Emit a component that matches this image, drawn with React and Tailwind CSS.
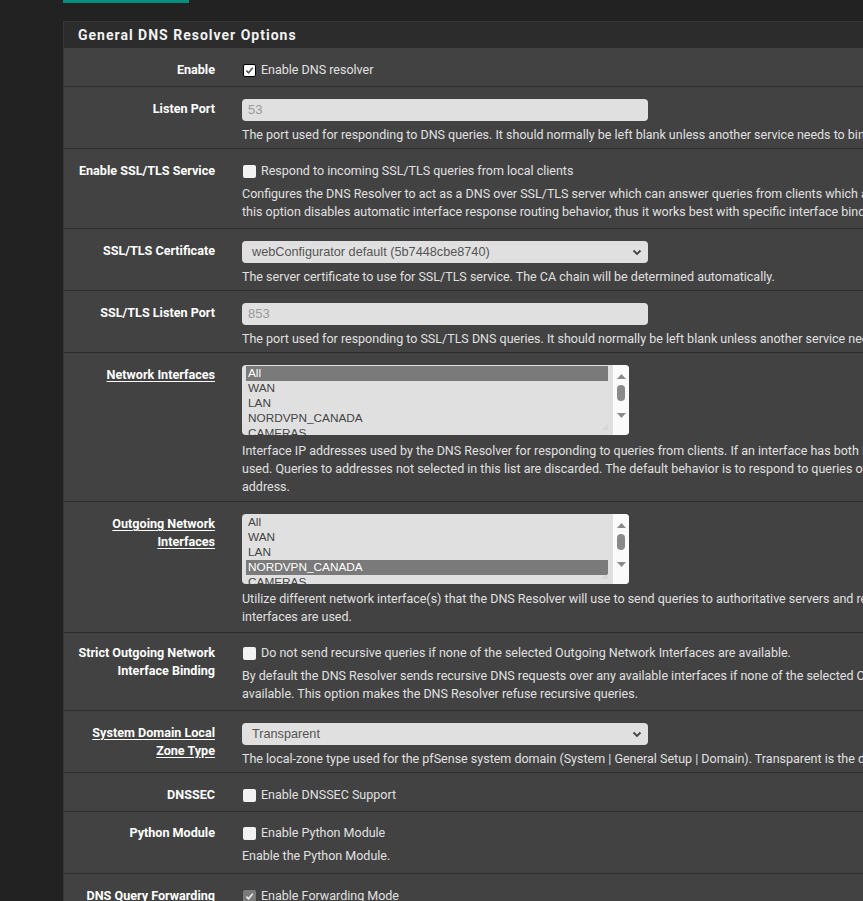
import React from "react";

const F = { fontFamily: "Roboto, 'Liberation Sans', sans-serif" };

function Check({ state }) {
  if (state === "on") {
    return (
      <span className="inline-flex items-center justify-center w-[13px] h-[13px] bg-white border border-black rounded-[2px] shrink-0">
        <svg width="9" height="9" viewBox="0 0 10 10"><path d="M1.5 5.2 L4 7.6 L8.6 2" fill="none" stroke="#555" strokeWidth="1.8" /></svg>
      </span>
    );
  }
  if (state === "dis") {
    return (
      <span className="inline-flex items-center justify-center w-[13px] h-[13px] bg-[#7a7a7a] rounded-[2px] shrink-0">
        <svg width="9" height="9" viewBox="0 0 10 10"><path d="M1.5 5.2 L4 7.6 L8.6 2" fill="none" stroke="#eee" strokeWidth="1.8" /></svg>
      </span>
    );
  }
  return <span className="inline-block w-[13px] h-[13px] bg-[#f2f2f2] rounded-[2px] shrink-0" />;
}

function CheckLine({ state, children }) {
  return (
    <div className="flex items-center gap-[5px] h-[20px] pl-[1px] text-[12.5px] text-[#e0e0e0] whitespace-nowrap">
      <Check state={state} />
      <span>{children}</span>
    </div>
  );
}

function Help({ lines, mt = "mt-[4px]" }) {
  return (
    <div className={`${mt} text-[12.5px] leading-[18px] text-[#e0e0e0]`}>
      {lines.map((l, i) => (
        <div key={i} className="whitespace-nowrap">{l}</div>
      ))}
    </div>
  );
}

function Input({ value }) {
  return (
    <div
      className="w-[406px] h-[22px] bg-[#e0e0e0] rounded-[4px] px-[6px] text-[13px] leading-[22px] text-[#999]"
      style={{ fontFamily: "'Liberation Sans', Arial, sans-serif" }}
    >
      {value}
    </div>
  );
}

function Select({ value }) {
  return (
    <div
      className="relative w-[406px] h-[22px] bg-[#e0e0e0] rounded-[4px] pl-[10px] text-[12.7px] leading-[22px] text-[#555]"
      style={{ fontFamily: "'Liberation Sans', Arial, sans-serif" }}
    >
      {value}
      <svg className="absolute right-[6px] top-[8px]" width="10" height="7" viewBox="0 0 10 7">
        <path d="M1.5 1.5 L5 5 L8.5 1.5" fill="none" stroke="#444" strokeWidth="1.8" />
      </svg>
    </div>
  );
}

function MultiList({ items, selected }) {
  return (
    <div className="flex w-[387px] h-[70px] bg-[#e0e0e0] rounded-[4px] overflow-hidden">
      <div
        className="relative w-[371px] pl-[4px] pr-[5px] pt-[1px] text-[11.8px] leading-[15px] text-[#444] overflow-hidden"
        style={{ fontFamily: "'Liberation Sans', Arial, sans-serif" }}
      >
        {items.map((it) => (
          <div key={it} className={`pl-[2px] ${it === selected ? "bg-[#7a7a7a] text-white" : ""}`}>{it}</div>
        ))}
        <svg className="absolute right-[4px] bottom-[4px]" width="7" height="7" viewBox="0 0 7 7">
          <path d="M1 6 L6 1 M4 6 L6 4" stroke="#c8c8c8" strokeWidth="1" />
        </svg>
      </div>
      <div className="w-[16px] bg-[#fafafa] flex flex-col items-center pt-[9px]">
        <svg width="9" height="5" viewBox="0 0 9 5"><path d="M0 5 L4.5 0 L9 5 Z" fill="#8a8a8a" /></svg>
        <div className="mt-[6px] w-[8px] h-[16px] rounded-[4px] bg-[#8a8a8a]" />
        <svg className="mt-[12px]" width="9" height="5" viewBox="0 0 9 5"><path d="M0 0 L4.5 5 L9 0 Z" fill="#8a8a8a" /></svg>
      </div>
    </div>
  );
}

function Row({ label, underline, children, pt = "pt-[12px]", pb = "pb-[6px]", last }) {
  return (
    <div className={`flex ${pt} ${pb} ${last ? "" : "border-b border-[#2d2d2d]"}`}>
      <div className="w-[166px] shrink-0 pr-[15px] pt-[1px] text-right text-[12.6px] leading-[18px] font-bold text-white">
        <span className={underline ? "underline underline-offset-[2px]" : ""}>{label}</span>
      </div>
      <div className="pl-[12px] flex-1">{children}</div>
    </div>
  );
}

const IFACES = ["All", "WAN", "LAN", "NORDVPN_CANADA", "CAMERAS"];

export default function App() {
  return (
    <div className="w-[863px] h-[901px] overflow-hidden bg-[#222222]" style={F}>
      <div className="ml-[63px] w-[126px] h-[3px] bg-[#00907e]" />
      <div className="mt-[18px] ml-[63px] w-[1100px] border-l border-t border-[#363636]">
        <div className="h-[26px] bg-[#2c2c2c] border-b border-[#2a2a2a] px-[14px] text-[14px] leading-[26px] font-bold text-[#f2f2f2] tracking-[1px]">
          General DNS Resolver Options
        </div>
        <div className="bg-[#424242]">
          <Row label="Enable" pb="pb-[6px]">
            <CheckLine state="on">Enable DNS resolver</CheckLine>
          </Row>
          <Row label="Listen Port" pb="pb-[4px]">
            <Input value="53" />
            <Help mt="mt-[5px]" lines={["The port used for responding to DNS queries. It should normally be left blank unless another service needs to bind to TCP/UDP port 53."]} />
          </Row>
          <Row label="Enable SSL/TLS Service" pb="pb-[7px]">
            <CheckLine state="off">Respond to incoming SSL/TLS queries from local clients</CheckLine>
            <Help
              lines={[
                "Configures the DNS Resolver to act as a DNS over SSL/TLS server which can answer queries from clients which also support DNS over TLS. Activating",
                "this option disables automatic interface response routing behavior, thus it works best with specific interface bindings.",
              ]}
            />
          </Row>
          <Row label="SSL/TLS Certificate" pb="pb-[4px]">
            <Select value="webConfigurator default (5b7448cbe8740)" />
            <Help mt="mt-[5px]" lines={["The server certificate to use for SSL/TLS service. The CA chain will be determined automatically."]} />
          </Row>
          <Row label="SSL/TLS Listen Port" pb="pb-[4px]">
            <Input value="853" />
            <Help mt="mt-[5px]" lines={["The port used for responding to SSL/TLS DNS queries. It should normally be left blank unless another service needs to bind to TCP/UDP port 853."]} />
          </Row>
          <Row label="Network Interfaces" underline pb="pb-[5px]">
            <MultiList items={IFACES} selected="All" />
            <Help
              mt="mt-[7px]"
              lines={[
                "Interface IP addresses used by the DNS Resolver for responding to queries from clients. If an interface has both IPv4 and IPv6 IPs, both are",
                "used. Queries to addresses not selected in this list are discarded. The default behavior is to respond to queries on every available IPv4 and IPv6",
                "address.",
              ]}
            />
          </Row>
          <Row label={<>Outgoing Network<br />Interfaces</>} underline pb="pb-[6px]">
            <MultiList items={IFACES} selected="NORDVPN_CANADA" />
            <Help
              mt="mt-[6px]"
              lines={[
                "Utilize different network interface(s) that the DNS Resolver will use to send queries to authoritative servers and receive their replies. By default all",
                "interfaces are used.",
              ]}
            />
          </Row>
          <Row label={<>Strict Outgoing Network<br />Interface Binding</>} pt="pt-[10px]" pb="pb-[7px]">
            <CheckLine state="off">Do not send recursive queries if none of the selected Outgoing Network Interfaces are available.</CheckLine>
            <Help
              lines={[
                "By default the DNS Resolver sends recursive DNS requests over any available interfaces if none of the selected Outgoing Network Interfaces are",
                "available. This option makes the DNS Resolver refuse recursive queries.",
              ]}
            />
          </Row>
          <Row label={<>System Domain Local<br />Zone Type</>} underline pb="pb-[4px]">
            <Select value="Transparent" />
            <Help mt="mt-[5px]" lines={["The local-zone type used for the pfSense system domain (System | General Setup | Domain). Transparent is the default. Local-Zone type descriptions are available in the unbound.conf(5) manual pages."]} />
          </Row>
          <Row label="DNSSEC" pt="pt-[12px]" pb="pb-[6px]">
            <CheckLine state="off">Enable DNSSEC Support</CheckLine>
          </Row>
          <Row label="Python Module" pt="pt-[11px]" pb="pb-[8px]">
            <CheckLine state="off">Enable Python Module</CheckLine>
            <Help lines={["Enable the Python Module."]} />
          </Row>
          <Row label="DNS Query Forwarding" last>
            <CheckLine state="dis">Enable Forwarding Mode</CheckLine>
            <div className="h-[40px]" />
          </Row>
        </div>
      </div>
    </div>
  );
}
